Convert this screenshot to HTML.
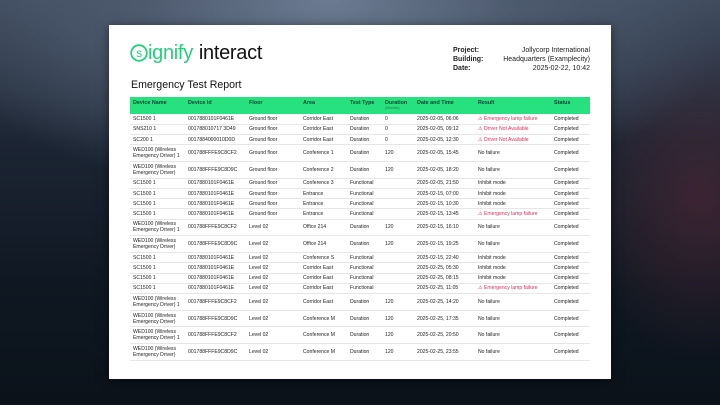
<!DOCTYPE html>
<html><head><meta charset="utf-8"><style>
*{margin:0;padding:0;box-sizing:border-box}
html,body{width:720px;height:405px;overflow:hidden}
body{font-family:"Liberation Sans",sans-serif;position:relative;
background:radial-gradient(ellipse 420px 200px at 330px 0px,#6c7b92 0%,#4d5a6e 45%,rgba(40,48,62,0) 100%),
radial-gradient(ellipse 120px 160px at 700px 200px,rgba(90,40,55,.55),rgba(0,0,0,0)),
linear-gradient(#3e4a5c 0%,#1c2533 35%,#0f1822 70%,#0b121a 100%);}
.page{position:absolute;left:109px;top:25px;width:502px;height:354px;background:#fff;box-shadow:0 2px 10px rgba(0,0,0,.5)}
.logo{position:absolute;left:130px;top:42px;font-size:20px;letter-spacing:-.3px;line-height:22px;display:flex;align-items:center;white-space:nowrap}
.logo svg{margin-right:0px}
.logo .g{color:#22d07a}
.logo .i{color:#111;margin-left:6px}
.title{position:absolute;left:131px;top:79px;font-size:10.6px;color:#111}
.meta{position:absolute;left:453px;top:46px;font-size:7px;line-height:9px;color:#222;width:137px}
.meta div{display:flex;justify-content:space-between}
.meta b{font-weight:bold}
table{position:absolute;left:130px;top:97px;width:460px;border-collapse:collapse;table-layout:fixed;font-size:5.1px;color:#222}
th{background:#27e07e;height:17px;text-align:left;font-weight:bold;vertical-align:top;padding:3px 0 0 3px;font-size:5.4px;color:#143}
td{padding:0 0 0 3px;border-bottom:1px solid #e6e6e6;line-height:6px;white-space:nowrap;overflow:hidden}
tr.s td{height:10.25px}
tr.d td{height:16.7px}
.r{color:#e0305a}
small{display:block;font-size:3.5px;font-weight:normal;line-height:4px;color:#375}
</style></head><body>
<div class="page"></div>
<div class="logo"><svg width="18" height="18" viewBox="0 0 18 18"><circle cx="9" cy="9" r="7.8" fill="none" stroke="#22d07a" stroke-width="1.8"/><text x="9" y="13" text-anchor="middle" font-family="Liberation Sans" font-size="12" fill="#22d07a">s</text></svg><span class="g">ignify</span><span class="i">interact</span></div>
<div class="meta">
<div><b>Project:</b><span>Jollycorp International</span></div>
<div><b>Building:</b><span>Headquarters (Examplecity)</span></div>
<div><b>Date:</b><span>2025-02-22, 10:42</span></div>
</div>
<div class="title">Emergency Test Report</div>
<table>
<colgroup><col style="width:55px"><col style="width:61px"><col style="width:54px"><col style="width:47px"><col style="width:35px"><col style="width:32px"><col style="width:61px"><col style="width:76px"><col style="width:39px"></colgroup>
<tr><th>Device Name</th><th>Device Id</th><th>Floor</th><th>Area</th><th>Test Type</th><th>Duration<small>(Minutes)</small></th><th>Date and Time</th><th>Result</th><th>Status</th></tr>
<tr class="s"><td>SC1500 1</td><td>0017880101F0461E</td><td>Ground floor</td><td>Corridor East</td><td>Duration</td><td>0</td><td>2025-02-05, 06:06</td><td class="r">⚠ Emergency lamp failure</td><td>Completed</td></tr>
<tr class="s"><td>SNS210 1</td><td>001788010717 3D49</td><td>Ground floor</td><td>Corridor East</td><td>Duration</td><td>0</td><td>2025-02-05, 09:12</td><td class="r">⚠ Driver Not Available</td><td>Completed</td></tr>
<tr class="s"><td>SC200 1</td><td>0017884000010D0D</td><td>Ground floor</td><td>Corridor East</td><td>Duration</td><td>0</td><td>2025-02-05, 12:30</td><td class="r">⚠ Driver Not Available</td><td>Completed</td></tr>
<tr class="d"><td>WED100 (Wireless<br>Emergency Driver) 1</td><td>001788FFFE9C8CF2</td><td>Ground floor</td><td>Conference 1</td><td>Duration</td><td>120</td><td>2025-02-05, 15:45</td><td>No failure</td><td>Completed</td></tr>
<tr class="d"><td>WED100 (Wireless<br>Emergency Driver)</td><td>001788FFFE9C8D9C</td><td>Ground floor</td><td>Conference 2</td><td>Duration</td><td>120</td><td>2025-02-05, 18:20</td><td>No failure</td><td>Completed</td></tr>
<tr class="s"><td>SC1500 1</td><td>0017880101F0461E</td><td>Ground floor</td><td>Conference 3</td><td>Functional</td><td></td><td>2025-02-05, 21:50</td><td>Inhibit mode</td><td>Completed</td></tr>
<tr class="s"><td>SC1500 1</td><td>0017880101F0461E</td><td>Ground floor</td><td>Entrance</td><td>Functional</td><td></td><td>2025-02-15, 07:00</td><td>Inhibit mode</td><td>Completed</td></tr>
<tr class="s"><td>SC1500 1</td><td>0017880101F0461E</td><td>Ground floor</td><td>Entrance</td><td>Functional</td><td></td><td>2025-02-15, 10:30</td><td>Inhibit mode</td><td>Completed</td></tr>
<tr class="s"><td>SC1500 1</td><td>0017880101F0461E</td><td>Ground floor</td><td>Entrance</td><td>Functional</td><td></td><td>2025-02-15, 13:45</td><td class="r">⚠ Emergency lamp failure</td><td>Completed</td></tr>
<tr class="d"><td>WED100 (Wireless<br>Emergency Driver) 1</td><td>001788FFFE9C8CF2</td><td>Level 02</td><td>Office 214</td><td>Duration</td><td>120</td><td>2025-02-15, 16:10</td><td>No failure</td><td>Completed</td></tr>
<tr class="d"><td>WED100 (Wireless<br>Emergency Driver)</td><td>001788FFFE9C8D9C</td><td>Level 02</td><td>Office 214</td><td>Duration</td><td>120</td><td>2025-02-15, 19:25</td><td>No failure</td><td>Completed</td></tr>
<tr class="s"><td>SC1500 1</td><td>0017880101F0461E</td><td>Level 02</td><td>Conference S</td><td>Functional</td><td></td><td>2025-02-15, 22:40</td><td>Inhibit mode</td><td>Completed</td></tr>
<tr class="s"><td>SC1500 1</td><td>0017880101F0461E</td><td>Level 02</td><td>Corridor East</td><td>Functional</td><td></td><td>2025-02-25, 05:30</td><td>Inhibit mode</td><td>Completed</td></tr>
<tr class="s"><td>SC1500 1</td><td>0017880101F0461E</td><td>Level 02</td><td>Corridor East</td><td>Functional</td><td></td><td>2025-02-25, 08:15</td><td>Inhibit mode</td><td>Completed</td></tr>
<tr class="s"><td>SC1500 1</td><td>0017880101F0461E</td><td>Level 02</td><td>Corridor East</td><td>Functional</td><td></td><td>2025-02-25, 11:05</td><td class="r">⚠ Emergency lamp failure</td><td>Completed</td></tr>
<tr class="d"><td>WED100 (Wireless<br>Emergency Driver) 1</td><td>001788FFFE9C8CF2</td><td>Level 02</td><td>Corridor East</td><td>Duration</td><td>120</td><td>2025-02-25, 14:20</td><td>No failure</td><td>Completed</td></tr>
<tr class="d"><td>WED100 (Wireless<br>Emergency Driver)</td><td>001788FFFE9C8D9C</td><td>Level 02</td><td>Conference M</td><td>Duration</td><td>120</td><td>2025-02-25, 17:35</td><td>No failure</td><td>Completed</td></tr>
<tr class="d"><td>WED100 (Wireless<br>Emergency Driver) 1</td><td>001788FFFE9C8CF2</td><td>Level 02</td><td>Conference M</td><td>Duration</td><td>120</td><td>2025-02-25, 20:50</td><td>No failure</td><td>Completed</td></tr>
<tr class="d"><td>WED100 (Wireless<br>Emergency Driver)</td><td>001788FFFE9C8D9C</td><td>Level 02</td><td>Conference M</td><td>Duration</td><td>120</td><td>2025-02-25, 23:55</td><td>No failure</td><td>Completed</td></tr>
</table>
</body></html>
